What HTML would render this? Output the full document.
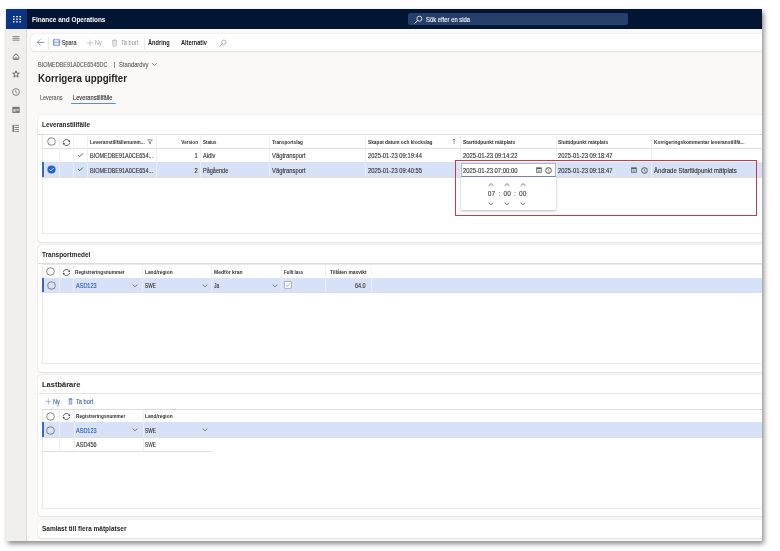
<!DOCTYPE html>
<html><head><meta charset="utf-8">
<style>
*{box-sizing:border-box;margin:0;padding:0}
html,body{width:780px;height:551px;background:#fff;overflow:hidden;font-family:"Liberation Sans",sans-serif;color:#252423}
#win{position:absolute;left:6px;top:9px;width:756px;height:532px;background:#faf9f8;box-shadow:2px 3px 5px rgba(0,0,0,.45)}
#clip{position:absolute;left:0;top:0;width:762px;height:541px;overflow:hidden;will-change:transform}
.a{position:absolute;overflow:visible}
.t{position:absolute;white-space:nowrap;line-height:1}
.card{position:absolute;background:#fff;border-radius:4px;box-shadow:0 0 1.2px rgba(0,0,0,.22),0 1px 2px rgba(0,0,0,.07)}
</style></head><body>
<div id="win"></div>
<div id="clip">
<div class="a" style="left:6px;top:9px;width:756px;height:20px;background:#021533;"></div>
<div class="a" style="left:6px;top:9px;width:21px;height:20px;background:#0b3582;"></div>
<svg class="a" style="left:12.5px;top:15.8px;" width="8" height="7" viewBox="0 0 8 7"><rect x="0.0" y="0.0" width="1.6" height="1.3" fill="#fff"/><rect x="0.0" y="2.6" width="1.6" height="1.3" fill="#fff"/><rect x="0.0" y="5.2" width="1.6" height="1.3" fill="#fff"/><rect x="3.2" y="0.0" width="1.6" height="1.3" fill="#fff"/><rect x="3.2" y="2.6" width="1.6" height="1.3" fill="#fff"/><rect x="3.2" y="5.2" width="1.6" height="1.3" fill="#fff"/><rect x="6.4" y="0.0" width="1.6" height="1.3" fill="#fff"/><rect x="6.4" y="2.6" width="1.6" height="1.3" fill="#fff"/><rect x="6.4" y="5.2" width="1.6" height="1.3" fill="#fff"/></svg>
<div class="a" style="left:408.2px;top:12.9px;width:220px;height:12.5px;background:#25406a;border-radius:2px"></div>
<svg class="a" style="left:413px;top:15px;" width="10" height="10" viewBox="0 0 10 10"><circle cx="6.4" cy="3.7" r="2.5" fill="none" stroke="#fff" stroke-width="0.8"/><line x1="4.6" y1="5.5" x2="1.8" y2="8.3" stroke="#fff" stroke-width="0.9" stroke-linecap="round"/></svg>
<div class="a" style="left:6px;top:29px;width:20.5px;height:512px;background:#f0efee;border-right:1px solid #dddbd9"></div>
<svg class="a" style="left:11px;top:34px;" width="10" height="9" viewBox="0 0 10 9"><rect x="1.5" y="2.1" width="7" height="1" fill="#8a8886"/><rect x="1.5" y="3.9" width="7" height="1" fill="#8a8886"/><rect x="1.5" y="5.7" width="7" height="1" fill="#8a8886"/></svg>
<svg class="a" style="left:11px;top:51.5px;" width="10" height="10" viewBox="0 0 10 10"><path d="M2.3 4.5 L5 1.8 L7.7 4.5 V7.4 H2.3 Z" fill="none" stroke="#5a5958" stroke-width="0.8" stroke-linejoin="round"/><path d="M4.1 7.4 V5.9 Q5 5.0 5.9 5.9 V7.4" fill="none" stroke="#5a5958" stroke-width="0.7"/></svg>
<svg class="a" style="left:11px;top:69px;" width="10" height="10" viewBox="0 0 10 10"><path d="M5 1.8 L5.9 4.1 L8.3 4.2 L6.4 5.7 L7.1 8.1 L5 6.7 L2.9 8.1 L3.6 5.7 L1.7 4.2 L4.1 4.1 Z" fill="none" stroke="#4a4948" stroke-width="0.8" stroke-linejoin="round"/></svg>
<svg class="a" style="left:11px;top:87px;" width="10" height="10" viewBox="0 0 10 10"><circle cx="5" cy="5" r="3.4" fill="none" stroke="#7a7977" stroke-width="0.9"/><path d="M4.8 3.2 V5.3 L6.2 6.1" fill="none" stroke="#7a7977" stroke-width="0.8"/></svg>
<svg class="a" style="left:11px;top:105px;" width="10" height="10" viewBox="0 0 10 10"><rect x="1.3" y="1.8" width="7.4" height="6.2" fill="#7d7b79"/><rect x="2.4" y="4.2" width="2.2" height="2.4" fill="#d8d6d4"/><rect x="5.4" y="4.2" width="2.2" height="1.6" fill="#d8d6d4"/></svg>
<svg class="a" style="left:11px;top:123px;" width="10" height="10" viewBox="0 0 10 10"><rect x="1.5" y="1.9" width="1.4" height="7" fill="#6d6b69"/><rect x="3.4" y="1.9" width="4.6" height="0.9" fill="#7d7b79"/><rect x="3.4" y="4" width="4.6" height="0.9" fill="#7d7b79"/><rect x="3.4" y="6.1" width="4.6" height="0.9" fill="#7d7b79"/><rect x="3.4" y="8" width="4.6" height="0.9" fill="#7d7b79"/></svg>
<div class="card" style="left:31px;top:34px;width:760px;height:17px"></div>
<svg class="a" style="left:36px;top:38px;" width="9" height="9" viewBox="0 0 9 9"><path d="M8 4.4 H1.4 M4.2 1.5 L1.3 4.4 L4.2 7.3" fill="none" stroke="#5b7db9" stroke-width="0.8" stroke-linecap="round" stroke-linejoin="round"/></svg>
<div class="a" style="left:48.3px;top:36.5px;width:0.7px;height:13.5px;background:#edebe9;"></div>
<svg class="a" style="left:52.8px;top:39px;" width="7" height="7" viewBox="0 0 7 7"><rect x="0.4" y="0.4" width="6.2" height="6.2" rx="0.7" fill="#a9bfe6" stroke="#5f86c9" stroke-width="0.8"/><rect x="1.8" y="0.6" width="3.4" height="2.1" fill="#e8eef8"/><rect x="1.6" y="3.9" width="3.8" height="2.4" fill="#dfe7f5"/></svg>
<svg class="a" style="left:85.5px;top:38.5px;" width="8" height="8" viewBox="0 0 8 8"><path d="M4 0.6 V7.4 M0.6 4 H7.4" stroke="#b4b2b0" stroke-width="0.7"/></svg>
<svg class="a" style="left:111px;top:38.8px;" width="7" height="8" viewBox="0 0 7 8"><path d="M1 1.6 H6 M2.5 1.6 V0.8 H4.5 V1.6 M1.5 1.6 L1.9 7.2 H5.1 L5.5 1.6" fill="#e9e8e7" stroke="#b4b2b0" stroke-width="0.6"/></svg>
<div class="a" style="left:143.5px;top:36.5px;width:0.7px;height:13.5px;background:#edebe9;"></div>
<svg class="a" style="left:218.5px;top:38.5px;" width="8" height="8" viewBox="0 0 8 8"><circle cx="4.8" cy="3.2" r="2.2" fill="none" stroke="#7d97c6" stroke-width="0.75"/><line x1="3.2" y1="4.8" x2="1" y2="7" stroke="#7d97c6" stroke-width="0.85" stroke-linecap="round"/></svg>
<div class="a" style="left:113.8px;top:62.3px;width:0.8px;height:6.2px;background:#8a8886;"></div>
<svg class="a" style="left:150.5px;top:62px;" width="7" height="5" viewBox="0 0 7 5"><path d="M1 1 L3.5 3.5 L6 1" fill="none" stroke="#605e5c" stroke-width="0.6"/></svg>
<div class="a" style="left:70.7px;top:103px;width:45.1px;height:1.2px;background:#5b8fd0;border-radius:1px"></div>
<div class="card" style="left:37.6px;top:114.6px;width:760px;height:127.3px"></div>
<div class="a" style="left:42.3px;top:134.3px;width:740px;height:99.9px;background:#fff;border:0.8px solid #ebe9e7"></div>
<div class="a" style="left:37.6px;top:134.0px;width:732.4px;height:1.0px;background:#dedcda;"></div>
<div class="a" style="left:42.3px;top:148.3px;width:727.7px;height:0.8px;background:#e1dfdd;"></div>
<div class="a" style="left:42.3px;top:162.2px;width:727.7px;height:0.8px;background:#e1dfdd;"></div>
<div class="a" style="left:42.3px;top:176.6px;width:727.7px;height:0.8px;background:#e1dfdd;"></div>
<div class="a" style="left:59.0px;top:134.3px;width:0.7px;height:27.899999999999977px;background:#f1f0ee;"></div>
<div class="a" style="left:73.2px;top:134.3px;width:0.7px;height:27.899999999999977px;background:#f1f0ee;"></div>
<div class="a" style="left:87.3px;top:134.3px;width:0.7px;height:27.899999999999977px;background:#f1f0ee;"></div>
<div class="a" style="left:155.7px;top:134.3px;width:0.7px;height:27.899999999999977px;background:#f1f0ee;"></div>
<div class="a" style="left:200.3px;top:134.3px;width:0.7px;height:27.899999999999977px;background:#f1f0ee;"></div>
<div class="a" style="left:269.2px;top:134.3px;width:0.7px;height:27.899999999999977px;background:#f1f0ee;"></div>
<div class="a" style="left:365.3px;top:134.3px;width:0.7px;height:27.899999999999977px;background:#f1f0ee;"></div>
<div class="a" style="left:460.4px;top:134.3px;width:0.7px;height:27.899999999999977px;background:#f1f0ee;"></div>
<div class="a" style="left:555.6px;top:134.3px;width:0.7px;height:27.899999999999977px;background:#f1f0ee;"></div>
<div class="a" style="left:651.1px;top:134.3px;width:0.7px;height:27.899999999999977px;background:#f1f0ee;"></div>
<div class="a" style="left:42.3px;top:162.1px;width:740px;height:14.5px;background:#d7e2f8;"></div>
<div class="a" style="left:59.0px;top:162.1px;width:0.7px;height:14.5px;background:rgba(255,255,255,.45);"></div>
<div class="a" style="left:73.2px;top:162.1px;width:0.7px;height:14.5px;background:rgba(255,255,255,.45);"></div>
<div class="a" style="left:87.3px;top:162.1px;width:0.7px;height:14.5px;background:rgba(255,255,255,.45);"></div>
<div class="a" style="left:155.7px;top:162.1px;width:0.7px;height:14.5px;background:rgba(255,255,255,.45);"></div>
<div class="a" style="left:200.3px;top:162.1px;width:0.7px;height:14.5px;background:rgba(255,255,255,.45);"></div>
<div class="a" style="left:269.2px;top:162.1px;width:0.7px;height:14.5px;background:rgba(255,255,255,.45);"></div>
<div class="a" style="left:365.3px;top:162.1px;width:0.7px;height:14.5px;background:rgba(255,255,255,.45);"></div>
<div class="a" style="left:460.4px;top:162.1px;width:0.7px;height:14.5px;background:rgba(255,255,255,.45);"></div>
<div class="a" style="left:555.6px;top:162.1px;width:0.7px;height:14.5px;background:rgba(255,255,255,.45);"></div>
<div class="a" style="left:651.1px;top:162.1px;width:0.7px;height:14.5px;background:rgba(255,255,255,.45);"></div>
<div class="a" style="left:42.2px;top:162.1px;width:2px;height:14.5px;background:#3a68c9;"></div>
<svg class="a" style="left:46.5px;top:137.0px;" width="9" height="9" viewBox="0 0 9 9"><path d="M0.4249999999999998 4.5 A4.075 4.075 0 1 0 8.575 4.5 A4.075 4.075 0 1 0 0.4249999999999998 4.5 Z M1.1749999999999998 4.5 A3.325 3.325 0 1 1 7.825 4.5 A3.325 3.325 0 1 1 1.1749999999999998 4.5 Z" fill="#6d6b69" fill-rule="evenodd"/></svg>
<svg class="a" style="left:61.8px;top:137.7px;" width="9" height="9" viewBox="0 0 9 9"><path d="M1.3 4.2 A3.3 3.3 0 0 1 7.5 3.3" fill="none" stroke="#3b3a39" stroke-width="0.75"/><path d="M7.7 4.9 A3.3 3.3 0 0 1 1.5 5.7" fill="none" stroke="#3b3a39" stroke-width="0.75"/><path d="M8.1 2.2 L7.9 4.3 L6.0 3.5 Z" fill="#3b3a39"/><path d="M0.9 6.8 L1.1 4.7 L3.0 5.5 Z" fill="#3b3a39"/></svg>
<svg class="a" style="left:146.8px;top:138.5px;" width="6" height="6" viewBox="0 0 6 6"><path d="M0.6 0.8 H5.4 L3.5 2.9 V5 L2.5 4.5 V2.9 Z" fill="none" stroke="#5f5e5c" stroke-width="0.65" stroke-linejoin="round"/></svg>
<svg class="a" style="left:451.5px;top:137.8px;" width="4" height="7" viewBox="0 0 4 7"><path d="M2 6.0 V1.0 M0.7 2.3 L2 1.0 L3.3 2.3" fill="none" stroke="#5f5e5c" stroke-width="0.65"/></svg>
<svg class="a" style="left:76.7px;top:152.2px;" width="7" height="6" viewBox="0 0 7 6"><path d="M1.2 3.1 L2.8 4.6 L5.9 1.5" fill="none" stroke="#3a6947" stroke-width="1.0"/></svg>
<svg class="a" style="left:46.5px;top:165.2px;" width="9" height="9" viewBox="0 0 9 9"><circle cx="4.5" cy="4.5" r="4.1" fill="#2563d4"/><path d="M2.6 4.6 L3.9 5.9 L6.4 3.3" fill="none" stroke="#fff" stroke-width="0.8" stroke-linecap="round" stroke-linejoin="round"/></svg>
<svg class="a" style="left:76.7px;top:166.4px;" width="7" height="6" viewBox="0 0 7 6"><path d="M1.2 3.1 L2.8 4.6 L5.9 1.5" fill="none" stroke="#3a6947" stroke-width="1.0"/></svg>
<svg class="a" style="left:630.8px;top:166.9px;" width="6" height="6" viewBox="0 0 6 6"><rect x="0.5" y="0.8" width="5" height="4.6" fill="none" stroke="#5f5e5c" stroke-width="0.7"/><rect x="0.5" y="0.8" width="5" height="1.4" fill="#5f5e5c"/><rect x="1.4" y="3" width="3.2" height="0.6" fill="#8a8886"/><rect x="1.4" y="4.1" width="3.2" height="0.6" fill="#8a8886"/></svg>
<svg class="a" style="left:640.5px;top:166.8px;" width="7" height="7" viewBox="0 0 7 7"><path d="M0.3500000000000001 3.5 A3.15 3.15 0 1 0 6.65 3.5 A3.15 3.15 0 1 0 0.3500000000000001 3.5 Z M1.15 3.5 A2.35 2.35 0 1 1 5.85 3.5 A2.35 2.35 0 1 1 1.15 3.5 Z" fill="#5f5e5c" fill-rule="evenodd"/><path d="M3.35 2.1 V3.75 L4.6 4.5" fill="none" stroke="#5f5e5c" stroke-width="0.7"/></svg>
<div class="a" style="left:461.1px;top:176.4px;width:94.5px;height:33.2px;background:#fff;box-shadow:0 0.8px 2px rgba(0,0,0,.28),0 0 1px rgba(0,0,0,.12)"></div>
<svg class="a" style="left:488.4px;top:182.60000000000002px;" width="6" height="3.4" viewBox="0 0 6 3.4"><path d="M0.6 2.8 L3 0.6 L5.4 2.8" fill="none" stroke="#6d6b69" stroke-width="0.9"/></svg>
<svg class="a" style="left:488.4px;top:201.8px;" width="6" height="3.4" viewBox="0 0 6 3.4"><path d="M0.6 0.6 L3 2.8 L5.4 0.6" fill="none" stroke="#6d6b69" stroke-width="0.9"/></svg>
<svg class="a" style="left:504.2px;top:182.60000000000002px;" width="6" height="3.4" viewBox="0 0 6 3.4"><path d="M0.6 2.8 L3 0.6 L5.4 2.8" fill="none" stroke="#6d6b69" stroke-width="0.9"/></svg>
<svg class="a" style="left:504.2px;top:201.8px;" width="6" height="3.4" viewBox="0 0 6 3.4"><path d="M0.6 0.6 L3 2.8 L5.4 0.6" fill="none" stroke="#6d6b69" stroke-width="0.9"/></svg>
<svg class="a" style="left:519.7px;top:182.60000000000002px;" width="6" height="3.4" viewBox="0 0 6 3.4"><path d="M0.6 2.8 L3 0.6 L5.4 2.8" fill="none" stroke="#6d6b69" stroke-width="0.9"/></svg>
<svg class="a" style="left:519.7px;top:201.8px;" width="6" height="3.4" viewBox="0 0 6 3.4"><path d="M0.6 0.6 L3 2.8 L5.4 0.6" fill="none" stroke="#6d6b69" stroke-width="0.9"/></svg>
<div class="a" style="left:460.8px;top:162.9px;width:95px;height:13.7px;background:#fff;border:0.7px solid #a9b8cf;border-bottom:1px solid #6f87ad"></div>
<svg class="a" style="left:535.5px;top:166.9px;" width="6" height="6" viewBox="0 0 6 6"><rect x="0.5" y="0.8" width="5" height="4.6" fill="none" stroke="#5f5e5c" stroke-width="0.7"/><rect x="0.5" y="0.8" width="5" height="1.4" fill="#5f5e5c"/><rect x="1.4" y="3" width="3.2" height="0.6" fill="#8a8886"/><rect x="1.4" y="4.1" width="3.2" height="0.6" fill="#8a8886"/></svg>
<svg class="a" style="left:545.3px;top:166.8px;" width="7" height="7" viewBox="0 0 7 7"><path d="M0.3500000000000001 3.5 A3.15 3.15 0 1 0 6.65 3.5 A3.15 3.15 0 1 0 0.3500000000000001 3.5 Z M1.15 3.5 A2.35 2.35 0 1 1 5.85 3.5 A2.35 2.35 0 1 1 1.15 3.5 Z" fill="#5f5e5c" fill-rule="evenodd"/><path d="M3.35 2.1 V3.75 L4.6 4.5" fill="none" stroke="#5f5e5c" stroke-width="0.7"/></svg>
<div class="a" style="left:455.1px;top:160.1px;width:302.0px;height:56.2px;background:transparent;border:1.7px solid #c63a47"></div>
<div class="card" style="left:37.6px;top:245px;width:760px;height:127px"></div>
<div class="a" style="left:42.3px;top:263.5px;width:740px;height:100.5px;background:#fff;border:0.8px solid #ebe9e7"></div>
<div class="a" style="left:37.6px;top:263.2px;width:732.4px;height:1.0px;background:#dedcda;"></div>
<div class="a" style="left:42.3px;top:277.9px;width:727.7px;height:0.8px;background:#e1dfdd;"></div>
<div class="a" style="left:42.3px;top:292.1px;width:727.7px;height:0.8px;background:#e1dfdd;"></div>
<div class="a" style="left:59.0px;top:263.5px;width:0.7px;height:14.5px;background:#f1f0ee;"></div>
<div class="a" style="left:73.2px;top:263.5px;width:0.7px;height:14.5px;background:#f1f0ee;"></div>
<div class="a" style="left:142.0px;top:263.5px;width:0.7px;height:14.5px;background:#f1f0ee;"></div>
<div class="a" style="left:211.2px;top:263.5px;width:0.7px;height:14.5px;background:#f1f0ee;"></div>
<div class="a" style="left:281.0px;top:263.5px;width:0.7px;height:14.5px;background:#f1f0ee;"></div>
<div class="a" style="left:324.6px;top:263.5px;width:0.7px;height:14.5px;background:#f1f0ee;"></div>
<div class="a" style="left:370.6px;top:263.5px;width:0.7px;height:14.5px;background:#f6f5f4;"></div>
<div class="a" style="left:42.3px;top:277.9px;width:740px;height:14.5px;background:#d7e2f8;"></div>
<div class="a" style="left:59.0px;top:277.9px;width:0.7px;height:14.5px;background:rgba(255,255,255,.45);"></div>
<div class="a" style="left:73.2px;top:277.9px;width:0.7px;height:14.5px;background:rgba(255,255,255,.45);"></div>
<div class="a" style="left:142.0px;top:277.9px;width:0.7px;height:14.5px;background:rgba(255,255,255,.45);"></div>
<div class="a" style="left:211.2px;top:277.9px;width:0.7px;height:14.5px;background:rgba(255,255,255,.45);"></div>
<div class="a" style="left:281.0px;top:277.9px;width:0.7px;height:14.5px;background:rgba(255,255,255,.45);"></div>
<div class="a" style="left:324.6px;top:277.9px;width:0.7px;height:14.5px;background:rgba(255,255,255,.45);"></div>
<div class="a" style="left:370.6px;top:277.9px;width:0.7px;height:14.5px;background:rgba(255,255,255,.45);"></div>
<div class="a" style="left:42.2px;top:277.9px;width:2px;height:14.5px;background:#3a68c9;"></div>
<svg class="a" style="left:46.3px;top:267.0px;" width="9" height="9" viewBox="0 0 9 9"><path d="M0.4249999999999998 4.5 A4.075 4.075 0 1 0 8.575 4.5 A4.075 4.075 0 1 0 0.4249999999999998 4.5 Z M1.1749999999999998 4.5 A3.325 3.325 0 1 1 7.825 4.5 A3.325 3.325 0 1 1 1.1749999999999998 4.5 Z" fill="#6d6b69" fill-rule="evenodd"/></svg>
<svg class="a" style="left:62.0px;top:267.7px;" width="9" height="9" viewBox="0 0 9 9"><path d="M1.3 4.2 A3.3 3.3 0 0 1 7.5 3.3" fill="none" stroke="#3b3a39" stroke-width="0.75"/><path d="M7.7 4.9 A3.3 3.3 0 0 1 1.5 5.7" fill="none" stroke="#3b3a39" stroke-width="0.75"/><path d="M8.1 2.2 L7.9 4.3 L6.0 3.5 Z" fill="#3b3a39"/><path d="M0.9 6.8 L1.1 4.7 L3.0 5.5 Z" fill="#3b3a39"/></svg>
<svg class="a" style="left:46.5px;top:280.8px;" width="9" height="9" viewBox="0 0 9 9"><path d="M0.4249999999999998 4.5 A4.075 4.075 0 1 0 8.575 4.5 A4.075 4.075 0 1 0 0.4249999999999998 4.5 Z M1.1749999999999998 4.5 A3.325 3.325 0 1 1 7.825 4.5 A3.325 3.325 0 1 1 1.1749999999999998 4.5 Z" fill="#6d6b69" fill-rule="evenodd"/></svg>
<svg class="a" style="left:132.4px;top:283.5px;" width="6" height="3.4" viewBox="0 0 6 3.4"><path d="M0.6 0.6 L3 2.8 L5.4 0.6" fill="none" stroke="#5f5e5c" stroke-width="0.75"/></svg>
<svg class="a" style="left:202.0px;top:283.5px;" width="6" height="3.4" viewBox="0 0 6 3.4"><path d="M0.6 0.6 L3 2.8 L5.4 0.6" fill="none" stroke="#5f5e5c" stroke-width="0.75"/></svg>
<svg class="a" style="left:271.6px;top:283.5px;" width="6" height="3.4" viewBox="0 0 6 3.4"><path d="M0.6 0.6 L3 2.8 L5.4 0.6" fill="none" stroke="#5f5e5c" stroke-width="0.75"/></svg>
<svg class="a" style="left:284px;top:281.4px;" width="8" height="8" viewBox="0 0 8 8"><rect x="0.4" y="0.4" width="7" height="7" rx="0.8" fill="#fff" stroke="#8a8886" stroke-width="0.6"/><path d="M1.8 4 L3.3 5.4 L6 2.5" fill="none" stroke="#3b6fc9" stroke-width="0.6"/></svg>
<div class="card" style="left:37.6px;top:374.6px;width:760px;height:141.6px"></div>
<div class="a" style="left:37.6px;top:393.0px;width:732.4px;height:0.8px;background:#e6e4e2;"></div>
<svg class="a" style="left:44.8px;top:397.5px;" width="7" height="7" viewBox="0 0 7 7"><path d="M3.3 0.5 V6.3 M0.4 3.4 H6.2" stroke="#7d9bd3" stroke-width="0.7"/></svg>
<svg class="a" style="left:67.8px;top:398px;" width="5" height="7" viewBox="0 0 5 7"><path d="M0.6 1.1 H4.4 M1.7 1.1 V0.4 H3.3 V1.1 M1 1.1 L1.3 6.3 H3.7 L4 1.1 Z" fill="#b9cbe9" stroke="#5d7fc0" stroke-width="0.55"/></svg>
<div class="a" style="left:42.3px;top:408.7px;width:740px;height:100px;background:#fff;border:0.8px solid #ebe9e7"></div>
<div class="a" style="left:42.3px;top:408.5px;width:727.7px;height:1.0px;background:#dedcda;"></div>
<div class="a" style="left:42.3px;top:422.3px;width:727.7px;height:0.8px;background:#e1dfdd;"></div>
<div class="a" style="left:42.3px;top:436.5px;width:727.7px;height:0.8px;background:#e1dfdd;"></div>
<div class="a" style="left:42.3px;top:450.7px;width:169.7px;height:0.8px;background:#e1dfdd;"></div>
<div class="a" style="left:59.1px;top:408.7px;width:0.7px;height:13.600000000000023px;background:#f1f0ee;"></div>
<div class="a" style="left:59.1px;top:436.6px;width:0.7px;height:14.199999999999989px;background:#f1f0ee;"></div>
<div class="a" style="left:73.6px;top:408.7px;width:0.7px;height:13.600000000000023px;background:#f1f0ee;"></div>
<div class="a" style="left:73.6px;top:436.6px;width:0.7px;height:14.199999999999989px;background:#f1f0ee;"></div>
<div class="a" style="left:142.6px;top:408.7px;width:0.7px;height:13.600000000000023px;background:#f1f0ee;"></div>
<div class="a" style="left:142.6px;top:436.6px;width:0.7px;height:14.199999999999989px;background:#f1f0ee;"></div>
<div class="a" style="left:42.3px;top:422.2px;width:740px;height:14.5px;background:#d7e2f8;"></div>
<div class="a" style="left:59.1px;top:422.2px;width:0.7px;height:14.5px;background:rgba(255,255,255,.45);"></div>
<div class="a" style="left:73.6px;top:422.2px;width:0.7px;height:14.5px;background:rgba(255,255,255,.45);"></div>
<div class="a" style="left:142.6px;top:422.2px;width:0.7px;height:14.5px;background:rgba(255,255,255,.45);"></div>
<div class="a" style="left:42.2px;top:422.2px;width:2px;height:14.5px;background:#3a68c9;"></div>
<svg class="a" style="left:46.4px;top:411.5px;" width="9" height="9" viewBox="0 0 9 9"><path d="M0.4249999999999998 4.5 A4.075 4.075 0 1 0 8.575 4.5 A4.075 4.075 0 1 0 0.4249999999999998 4.5 Z M1.1749999999999998 4.5 A3.325 3.325 0 1 1 7.825 4.5 A3.325 3.325 0 1 1 1.1749999999999998 4.5 Z" fill="#6d6b69" fill-rule="evenodd"/></svg>
<svg class="a" style="left:61.8px;top:412.1px;" width="9" height="9" viewBox="0 0 9 9"><path d="M1.3 4.2 A3.3 3.3 0 0 1 7.5 3.3" fill="none" stroke="#3b3a39" stroke-width="0.75"/><path d="M7.7 4.9 A3.3 3.3 0 0 1 1.5 5.7" fill="none" stroke="#3b3a39" stroke-width="0.75"/><path d="M8.1 2.2 L7.9 4.3 L6.0 3.5 Z" fill="#3b3a39"/><path d="M0.9 6.8 L1.1 4.7 L3.0 5.5 Z" fill="#3b3a39"/></svg>
<svg class="a" style="left:46.4px;top:425.5px;" width="9" height="9" viewBox="0 0 9 9"><path d="M0.4249999999999998 4.5 A4.075 4.075 0 1 0 8.575 4.5 A4.075 4.075 0 1 0 0.4249999999999998 4.5 Z M1.1749999999999998 4.5 A3.325 3.325 0 1 1 7.825 4.5 A3.325 3.325 0 1 1 1.1749999999999998 4.5 Z" fill="#6d6b69" fill-rule="evenodd"/></svg>
<svg class="a" style="left:132.4px;top:427.90000000000003px;" width="6" height="3.4" viewBox="0 0 6 3.4"><path d="M0.6 0.6 L3 2.8 L5.4 0.6" fill="none" stroke="#5f5e5c" stroke-width="0.75"/></svg>
<svg class="a" style="left:201.6px;top:427.90000000000003px;" width="6" height="3.4" viewBox="0 0 6 3.4"><path d="M0.6 0.6 L3 2.8 L5.4 0.6" fill="none" stroke="#5f5e5c" stroke-width="0.75"/></svg>
<div class="card" style="left:37.6px;top:519.5px;width:760px;height:18.7px"></div>
<div class="t" style="left:32.10px;top:16px;font-size:7.000px;font-weight:700;color:#ffffff;transform:scaleX(0.9205);transform-origin:left center;">Finance and Operations</div>
<div class="t" style="left:425.90px;top:17px;font-size:6.500px;font-weight:400;color:#f4f6fa;-webkit-text-stroke:0.12px #f4f6fa;transform:scaleX(0.9041);transform-origin:left center;">Sök efter en sida</div>
<div class="t" style="left:62.10px;top:40px;font-size:6.500px;font-weight:400;color:#323130;-webkit-text-stroke:0.12px #323130;transform:scaleX(0.8302);transform-origin:left center;">Spara</div>
<div class="t" style="left:95.20px;top:40px;font-size:6.500px;font-weight:400;color:#b4b2b0;-webkit-text-stroke:0.12px #b4b2b0;transform:scaleX(0.8686);transform-origin:left center;">Ny</div>
<div class="t" style="left:120.90px;top:40px;font-size:6.500px;font-weight:400;color:#a19f9d;-webkit-text-stroke:0.12px #a19f9d;transform:scaleX(0.8706);transform-origin:left center;">Ta bort</div>
<div class="t" style="left:148.30px;top:40px;font-size:6.500px;font-weight:700;color:#252423;transform:scaleX(0.8670);transform-origin:left center;">Ändring</div>
<div class="t" style="left:180.50px;top:40px;font-size:6.500px;font-weight:700;color:#252423;transform:scaleX(0.8639);transform-origin:left center;">Alternativ</div>
<div class="t" style="left:38.30px;top:62px;font-size:6.500px;font-weight:400;color:#605e5c;-webkit-text-stroke:0.12px #605e5c;transform:scaleX(0.8425);transform-origin:left center;">BIOMEDBE91A0CE6545DC</div>
<div class="t" style="left:119.30px;top:62px;font-size:6.500px;font-weight:400;color:#605e5c;-webkit-text-stroke:0.12px #605e5c;transform:scaleX(0.8911);transform-origin:left center;">Standardvy</div>
<div class="t" style="left:38.30px;top:74px;font-size:10.000px;font-weight:700;color:#252423;transform:scaleX(0.9778);transform-origin:left center;">Korrigera uppgifter</div>
<div class="t" style="left:40.30px;top:95px;font-size:6.500px;font-weight:400;color:#605e5c;-webkit-text-stroke:0.12px #605e5c;transform:scaleX(0.8377);transform-origin:left center;">Leverans</div>
<div class="t" style="left:73.30px;top:95px;font-size:6.500px;font-weight:400;color:#323130;-webkit-text-stroke:0.12px #323130;transform:scaleX(0.8794);transform-origin:left center;">Leveranstillfälle</div>
<div class="t" style="left:41.80px;top:121px;font-size:7.000px;font-weight:700;color:#252423;transform:scaleX(0.9090);transform-origin:left center;">Leveranstillfälle</div>
<div class="t" style="left:89.90px;top:139px;font-size:6.100px;font-weight:700;color:#323130;transform:scaleX(0.7885);transform-origin:left center;">Leveranstillfällenumm...</div>
<div class="t" style="left:176.16px;top:139px;font-size:6.100px;font-weight:700;color:#323130;transform:scaleX(0.7578);transform-origin:right center;">Version</div>
<div class="t" style="left:202.70px;top:139px;font-size:6.100px;font-weight:700;color:#323130;transform:scaleX(0.7241);transform-origin:left center;">Status</div>
<div class="t" style="left:272.20px;top:139px;font-size:6.100px;font-weight:700;color:#323130;transform:scaleX(0.7685);transform-origin:left center;">Transportslag</div>
<div class="t" style="left:367.70px;top:139px;font-size:6.100px;font-weight:700;color:#323130;transform:scaleX(0.7874);transform-origin:left center;">Skapat datum och klockslag</div>
<div class="t" style="left:463.00px;top:139px;font-size:6.100px;font-weight:700;color:#323130;transform:scaleX(0.8064);transform-origin:left center;">Starttidpunkt mätplats</div>
<div class="t" style="left:558.30px;top:139px;font-size:6.100px;font-weight:700;color:#323130;transform:scaleX(0.8051);transform-origin:left center;">Sluttidpunkt mätplats</div>
<div class="t" style="left:653.80px;top:139px;font-size:6.100px;font-weight:700;color:#323130;transform:scaleX(0.7978);transform-origin:left center;">Korrigeringskommentar leveranstillfä...</div>
<div class="t" style="left:90.20px;top:153px;font-size:6.500px;font-weight:400;color:#323130;-webkit-text-stroke:0.12px #323130;transform:scaleX(0.8424);transform-origin:left center;">BIOMEDBE91A0CE654...</div>
<div class="t" style="left:194.38px;top:153px;font-size:6.500px;font-weight:400;color:#323130;-webkit-text-stroke:0.12px #323130;transform:scaleX(0.8850);transform-origin:right center;">1</div>
<div class="t" style="left:203.30px;top:153px;font-size:6.500px;font-weight:400;color:#323130;-webkit-text-stroke:0.12px #323130;transform:scaleX(0.8661);transform-origin:left center;">Aktiv</div>
<div class="t" style="left:272.20px;top:153px;font-size:6.500px;font-weight:400;color:#323130;-webkit-text-stroke:0.12px #323130;transform:scaleX(0.9028);transform-origin:left center;">Vägtransport</div>
<div class="t" style="left:368.00px;top:153px;font-size:6.500px;font-weight:400;color:#323130;-webkit-text-stroke:0.12px #323130;transform:scaleX(0.8947);transform-origin:left center;">2025-01-23 09:19:44</div>
<div class="t" style="left:463.00px;top:153px;font-size:6.500px;font-weight:400;color:#323130;-webkit-text-stroke:0.12px #323130;transform:scaleX(0.9030);transform-origin:left center;">2025-01-23 09:14:22</div>
<div class="t" style="left:558.30px;top:153px;font-size:6.500px;font-weight:400;color:#323130;-webkit-text-stroke:0.12px #323130;transform:scaleX(0.9013);transform-origin:left center;">2025-01-23 09:18:47</div>
<div class="t" style="left:90.20px;top:168px;font-size:6.500px;font-weight:400;color:#323130;-webkit-text-stroke:0.12px #323130;transform:scaleX(0.8424);transform-origin:left center;">BIOMEDBE91A0CE654...</div>
<div class="t" style="left:194.38px;top:168px;font-size:6.500px;font-weight:400;color:#323130;-webkit-text-stroke:0.12px #323130;transform:scaleX(0.8850);transform-origin:right center;">2</div>
<div class="t" style="left:203.00px;top:168px;font-size:6.500px;font-weight:400;color:#323130;-webkit-text-stroke:0.12px #323130;transform:scaleX(0.8502);transform-origin:left center;">Pågående</div>
<div class="t" style="left:272.20px;top:168px;font-size:6.500px;font-weight:400;color:#323130;-webkit-text-stroke:0.12px #323130;transform:scaleX(0.9028);transform-origin:left center;">Vägtransport</div>
<div class="t" style="left:368.00px;top:168px;font-size:6.500px;font-weight:400;color:#323130;-webkit-text-stroke:0.12px #323130;transform:scaleX(0.8947);transform-origin:left center;">2025-01-23 09:40:55</div>
<div class="t" style="left:558.30px;top:168px;font-size:6.500px;font-weight:400;color:#323130;-webkit-text-stroke:0.12px #323130;transform:scaleX(0.9013);transform-origin:left center;">2025-01-23 09:18:47</div>
<div class="t" style="left:654.20px;top:168px;font-size:6.500px;font-weight:400;color:#323130;-webkit-text-stroke:0.12px #323130;transform:scaleX(0.9278);transform-origin:left center;">Ändrade Starttidpunkt mätplats</div>
<div class="t" style="left:487.80px;top:191px;font-size:6.500px;font-weight:400;color:#484644;-webkit-text-stroke:0.12px #484644;">07</div>
<div class="t" style="left:498.40px;top:191px;font-size:6.500px;font-weight:400;color:#605e5c;-webkit-text-stroke:0.12px #605e5c;">:</div>
<div class="t" style="left:503.60px;top:191px;font-size:6.500px;font-weight:400;color:#484644;-webkit-text-stroke:0.12px #484644;">00</div>
<div class="t" style="left:513.90px;top:191px;font-size:6.500px;font-weight:400;color:#605e5c;-webkit-text-stroke:0.12px #605e5c;">:</div>
<div class="t" style="left:519.10px;top:191px;font-size:6.500px;font-weight:400;color:#484644;-webkit-text-stroke:0.12px #484644;">00</div>
<div class="t" style="left:463.30px;top:168px;font-size:6.500px;font-weight:400;color:#323130;-webkit-text-stroke:0.12px #323130;transform:scaleX(0.9013);transform-origin:left center;">2025-01-23 07:00:00</div>
<div class="t" style="left:42.40px;top:251px;font-size:7.000px;font-weight:700;color:#252423;transform:scaleX(0.9198);transform-origin:left center;">Transportmedel</div>
<div class="t" style="left:75.40px;top:269px;font-size:6.100px;font-weight:700;color:#323130;transform:scaleX(0.7840);transform-origin:left center;">Registreringsnummer</div>
<div class="t" style="left:145.20px;top:269px;font-size:6.100px;font-weight:700;color:#323130;transform:scaleX(0.7907);transform-origin:left center;">Land/region</div>
<div class="t" style="left:214.30px;top:269px;font-size:6.100px;font-weight:700;color:#323130;transform:scaleX(0.8192);transform-origin:left center;">Medför kran</div>
<div class="t" style="left:284.00px;top:269px;font-size:6.100px;font-weight:700;color:#323130;transform:scaleX(0.7299);transform-origin:left center;">Fullt lass</div>
<div class="t" style="left:330.00px;top:269px;font-size:6.100px;font-weight:700;color:#323130;transform:scaleX(0.8038);transform-origin:left center;">Tillåten maxvikt</div>
<div class="t" style="left:75.70px;top:283px;font-size:6.500px;font-weight:400;color:#2b5ab0;-webkit-text-stroke:0.12px #2b5ab0;transform:scaleX(0.8509);transform-origin:left center;">ASD123</div>
<div class="t" style="left:145.30px;top:283px;font-size:6.500px;font-weight:400;color:#323130;-webkit-text-stroke:0.12px #323130;transform:scaleX(0.7294);transform-origin:left center;">SWE</div>
<div class="t" style="left:214.30px;top:283px;font-size:6.500px;font-weight:400;color:#323130;-webkit-text-stroke:0.12px #323130;transform:scaleX(0.7574);transform-origin:left center;">Ja</div>
<div class="t" style="left:353.45px;top:283px;font-size:6.500px;font-weight:400;color:#323130;-webkit-text-stroke:0.12px #323130;transform:scaleX(0.8457);transform-origin:right center;">64.0</div>
<div class="t" style="left:42.30px;top:381px;font-size:7.000px;font-weight:700;color:#252423;transform:scaleX(1.0727);transform-origin:left center;">Lastbärare</div>
<div class="t" style="left:53.30px;top:399px;font-size:6.500px;font-weight:400;color:#3e63a8;-webkit-text-stroke:0.12px #3e63a8;transform:scaleX(0.8686);transform-origin:left center;">Ny</div>
<div class="t" style="left:76.30px;top:399px;font-size:6.500px;font-weight:400;color:#3e63a8;-webkit-text-stroke:0.12px #3e63a8;transform:scaleX(0.8756);transform-origin:left center;">Ta bort</div>
<div class="t" style="left:75.50px;top:413px;font-size:6.100px;font-weight:700;color:#323130;transform:scaleX(0.7777);transform-origin:left center;">Registreringsnummer</div>
<div class="t" style="left:145.20px;top:413px;font-size:6.100px;font-weight:700;color:#323130;transform:scaleX(0.7907);transform-origin:left center;">Land/region</div>
<div class="t" style="left:75.70px;top:428px;font-size:6.500px;font-weight:400;color:#2b5ab0;-webkit-text-stroke:0.12px #2b5ab0;transform:scaleX(0.8509);transform-origin:left center;">ASD123</div>
<div class="t" style="left:145.30px;top:428px;font-size:6.500px;font-weight:400;color:#323130;-webkit-text-stroke:0.12px #323130;transform:scaleX(0.7429);transform-origin:left center;">SWE</div>
<div class="t" style="left:75.70px;top:442px;font-size:6.500px;font-weight:400;color:#323130;-webkit-text-stroke:0.12px #323130;transform:scaleX(0.8509);transform-origin:left center;">ASD456</div>
<div class="t" style="left:145.30px;top:442px;font-size:6.500px;font-weight:400;color:#323130;-webkit-text-stroke:0.12px #323130;transform:scaleX(0.7429);transform-origin:left center;">SWE</div>
<div class="t" style="left:42.30px;top:525px;font-size:7.000px;font-weight:700;color:#252423;transform:scaleX(0.9271);transform-origin:left center;">Samlast till flera mätplatser</div>
</div>
</body></html>
